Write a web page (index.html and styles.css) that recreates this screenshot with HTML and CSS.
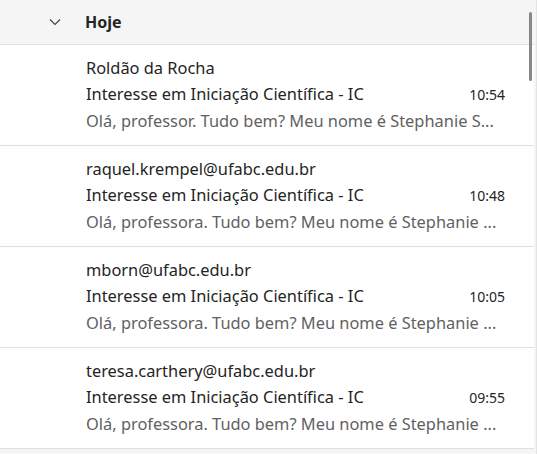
FILE: index.html
```html
<!DOCTYPE html>
<html lang="pt">
<head>
<meta charset="utf-8">
<link rel="stylesheet" href="styles.css">
</head>
<body>
<div class="pane">
  <div class="list">
    <div class="group-head">
      <svg class="chev" width="12" height="8" viewBox="0 0 12 8"><path d="M1 1.5 L6 6.5 L11 1.5" fill="none" stroke="#404040" stroke-width="1.1"/></svg>
      <span class="group-title">Hoje</span>
    </div>
    <div class="mail">
      <div class="from">Roldão da Rocha</div>
      <div class="subj-row"><span class="subj">Interesse em Iniciação Científica - IC</span><span class="time">10:54</span></div>
      <div class="preview">Olá, professor. Tudo bem? Meu nome é Stephanie S...</div>
    </div>
    <div class="mail">
      <div class="from">raquel.krempel@ufabc.edu.br</div>
      <div class="subj-row"><span class="subj">Interesse em Iniciação Científica - IC</span><span class="time">10:48</span></div>
      <div class="preview">Olá, professora. Tudo bem? Meu nome é Stephanie ...</div>
    </div>
    <div class="mail">
      <div class="from">mborn@ufabc.edu.br</div>
      <div class="subj-row"><span class="subj">Interesse em Iniciação Científica - IC</span><span class="time">10:05</span></div>
      <div class="preview">Olá, professora. Tudo bem? Meu nome é Stephanie ...</div>
    </div>
    <div class="mail">
      <div class="from">teresa.carthery@ufabc.edu.br</div>
      <div class="subj-row"><span class="subj">Interesse em Iniciação Científica - IC</span><span class="time">09:55</span></div>
      <div class="preview">Olá, professora. Tudo bem? Meu nome é Stephanie ...</div>
    </div>
  </div>
  <div class="thumb"></div>
</div>
</body>
</html>
```
FILE: styles.css
```css
html, body {
  margin: 0;
  padding: 0;
  background: #f5f5f5;
}
body {
  font-family: "Noto Sans", "Open Sans", sans-serif;
  color: #242424;
  width: 537px;
  height: 454px;
  overflow: hidden;
}
.pane {
  position: relative;
  height: 454px;
  border-right: 1px solid #e5e5e5;
  box-sizing: border-box;
}
.list {
  display: flex;
  flex-direction: column;
  margin-right: 2px;
}
.group-head {
  height: 44px;
  display: flex;
  align-items: center;
  background: #f5f5f5;
  border-bottom: 1px solid #e0e0e0;
}
.chev {
  margin-left: 49px;
  margin-right: 24px;
}
.group-title {
  font-weight: 700;
  font-size: 16px;
}
.mail {
  height: 101px;
  box-sizing: border-box;
  background: #ffffff;
  border-bottom: 1px solid #e0e0e0;
  padding: 10px 29px 0 86px;
  font-size: 16.4px;
}
.from {
  line-height: 26px;
}
.subj-row {
  display: flex;
  justify-content: space-between;
  align-items: baseline;
  line-height: 26px;
}
.time {
  font-size: 14px;
}
.preview {
  color: #616161;
  line-height: 26px;
}
.thumb {
  position: absolute;
  left: 529px;
  top: 12px;
  width: 3px;
  height: 69px;
  border-radius: 2px;
  background: #888888;
}
```
